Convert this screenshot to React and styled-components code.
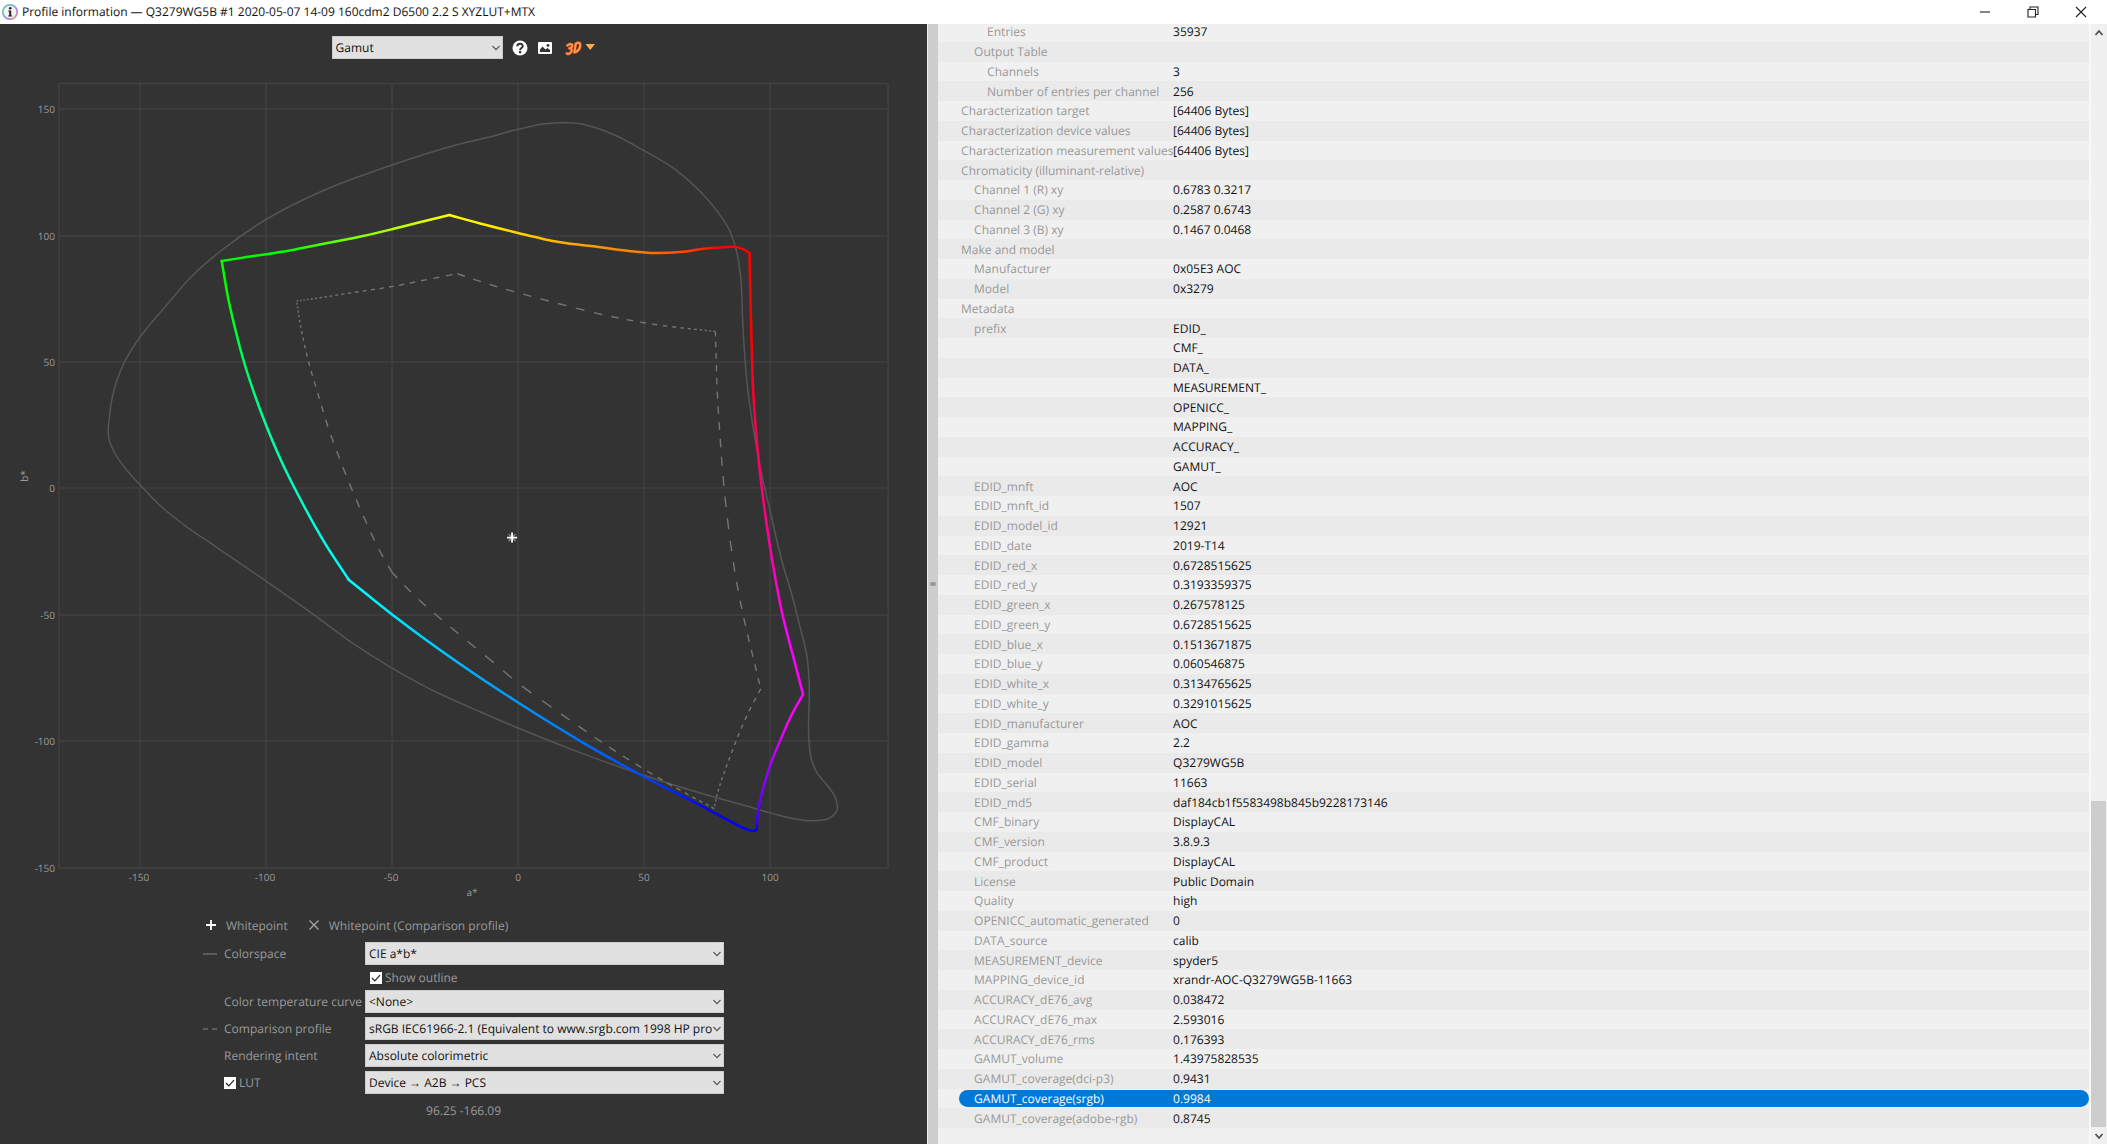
import React, { useState } from "react";
import styled, { createGlobalStyle } from "styled-components";

const GlobalStyle = createGlobalStyle`
  * {
    box-sizing: border-box;
  }
  body {
    margin: 0;
    overflow: hidden;
    background: #f0f0f0;
    font-family: "Open Sans", "Noto Sans", sans-serif;
    font-size: 12px;
    text-rendering: geometricPrecision;
  }
`;

// [label, level, value]
const profileRows = [
  ["Entries", 2, "35937"],
  ["Output Table", 1, ""],
  ["Channels", 2, "3"],
  ["Number of entries per channel", 2, "256"],
  ["Characterization target", 0, "[64406 Bytes]"],
  ["Characterization device values", 0, "[64406 Bytes]"],
  ["Characterization measurement values", 0, "[64406 Bytes]"],
  ["Chromaticity (illuminant-relative)", 0, ""],
  ["Channel 1 (R) xy", 1, "0.6783 0.3217"],
  ["Channel 2 (G) xy", 1, "0.2587 0.6743"],
  ["Channel 3 (B) xy", 1, "0.1467 0.0468"],
  ["Make and model", 0, ""],
  ["Manufacturer", 1, "0x05E3 AOC"],
  ["Model", 1, "0x3279"],
  ["Metadata", 0, ""],
  ["prefix", 1, "EDID_"],
  ["", 1, "CMF_"],
  ["", 1, "DATA_"],
  ["", 1, "MEASUREMENT_"],
  ["", 1, "OPENICC_"],
  ["", 1, "MAPPING_"],
  ["", 1, "ACCURACY_"],
  ["", 1, "GAMUT_"],
  ["EDID_mnft", 1, "AOC"],
  ["EDID_mnft_id", 1, "1507"],
  ["EDID_model_id", 1, "12921"],
  ["EDID_date", 1, "2019-T14"],
  ["EDID_red_x", 1, "0.6728515625"],
  ["EDID_red_y", 1, "0.3193359375"],
  ["EDID_green_x", 1, "0.267578125"],
  ["EDID_green_y", 1, "0.6728515625"],
  ["EDID_blue_x", 1, "0.1513671875"],
  ["EDID_blue_y", 1, "0.060546875"],
  ["EDID_white_x", 1, "0.3134765625"],
  ["EDID_white_y", 1, "0.3291015625"],
  ["EDID_manufacturer", 1, "AOC"],
  ["EDID_gamma", 1, "2.2"],
  ["EDID_model", 1, "Q3279WG5B"],
  ["EDID_serial", 1, "11663"],
  ["EDID_md5", 1, "daf184cb1f5583498b845b9228173146"],
  ["CMF_binary", 1, "DisplayCAL"],
  ["CMF_version", 1, "3.8.9.3"],
  ["CMF_product", 1, "DisplayCAL"],
  ["License", 1, "Public Domain"],
  ["Quality", 1, "high"],
  ["OPENICC_automatic_generated", 1, "0"],
  ["DATA_source", 1, "calib"],
  ["MEASUREMENT_device", 1, "spyder5"],
  ["MAPPING_device_id", 1, "xrandr-AOC-Q3279WG5B-11663"],
  ["ACCURACY_dE76_avg", 1, "0.038472"],
  ["ACCURACY_dE76_max", 1, "2.593016"],
  ["ACCURACY_dE76_rms", 1, "0.176393"],
  ["GAMUT_volume", 1, "1.43975828535"],
  ["GAMUT_coverage(dci-p3)", 1, "0.9431"],
  ["GAMUT_coverage(srgb)", 1, "0.9984"],
  ["GAMUT_coverage(adobe-rgb)", 1, "0.8745"],
];

const spectralLocus = [
  [563, 122.5], [543, 124], [518, 129.3], [487, 137.5], [460, 144], [392, 165], [320, 192],
  [266, 219.5], [222, 250], [193, 275], [165, 307], [140, 337], [124, 363], [113.3, 393],
  [109.3, 417], [108.7, 438], [114, 451.7], [125, 468], [144, 489], [160, 505.5], [183, 524],
  [217, 547.5], [266, 581], [313, 614], [350, 641.3], [392, 668], [437, 692.5], [480, 711.7],
  [518, 728], [582, 753.3], [643, 775], [700, 793], [743, 805], [770, 812.8], [793, 818.5],
  [815, 820.7], [829.5, 818], [837, 810], [835.7, 798.5], [829, 787.7], [816.7, 772.3],
  [811, 758], [809, 741.7], [809, 680], [807, 657], [800, 627], [792.3, 596.7], [781, 558],
  [770.7, 513.5], [762, 476], [753, 427], [746.7, 380], [742.7, 323], [741, 281.7],
  [738.3, 260], [735.3, 246.7], [729.3, 230], [716.7, 210.7], [700.7, 192], [675, 169.3],
  [644, 150.7], [616.7, 136], [593.3, 127], [580, 123.7], [563, 122.5],
];

// one entry per edge of the gamut hull; axis is the direction the gradient runs in
const gamutEdges = [
  {
    id: "green-yellow",
    axis: "x",
    stops: [[0, "#00ff00"], [0.28, "#00ff00"], [0.5, "#66ff00"], [0.75, "#b4ff00"], [1, "#ffff00"]],
    points: [[221.7, 261], [243, 257.6], [266.7, 254.2], [288.3, 250.8], [325, 243.5], [363, 236], [392.7, 229], [416.7, 223], [449.3, 215]],
  },
  {
    id: "yellow-red",
    axis: "x",
    stops: [[0, "#ffff00"], [0.12, "#fff000"], [0.35, "#ffb400"], [0.65, "#ff7800"], [0.8, "#ff4000"], [0.9, "#ff0000"], [1, "#ff0000"]],
    points: [[449.3, 215], [480, 223.5], [518, 233], [543, 238.9], [562, 242.4], [593, 246.2], [627, 250.7], [655, 253], [680, 252], [706, 248.5], [722, 247.2], [738, 247.4], [743.5, 249.3], [749.5, 253]],
  },
  {
    id: "red-magenta",
    axis: "y",
    stops: [[0, "#ff0000"], [0.2, "#ff0000"], [0.4, "#ff0050"], [0.56, "#ff0078"], [0.75, "#ff00c8"], [0.86, "#ff00ff"], [1, "#ff00ff"]],
    points: [[749.5, 253], [750, 280], [751.5, 340], [753.2, 392], [755.3, 424], [759.3, 467], [766, 520], [773.3, 567], [782.3, 614], [793, 656], [803, 694.3]],
  },
  {
    id: "magenta-blue",
    axis: "y",
    stops: [[0, "#ff00ff"], [0.2, "#ff00ff"], [0.5, "#a800ff"], [0.8, "#6400ff"], [0.95, "#3200ff"], [1, "#0000ff"]],
    points: [[803, 694.3], [791.5, 715], [779.3, 742.5], [770, 765.5], [764, 785], [759, 805.5], [757.2, 819], [756.7, 829.5]],
  },
  {
    id: "blue-cyan",
    axis: "x",
    stops: [[0, "#0000ff"], [0.12, "#0000ff"], [0.28, "#0046ff"], [0.55, "#0090ff"], [0.72, "#00b4ff"], [0.88, "#00e6ff"], [1, "#00ffff"]],
    points: [[756.7, 829.5], [754, 831], [750, 830.3], [729, 820.5], [701, 805.7], [644, 776.7], [582, 742], [518, 702.5], [460, 664], [392.7, 615], [348.7, 579.7]],
  },
  {
    id: "cyan-green",
    axis: "y",
    stops: [[0, "#00ffff"], [0.12, "#00ffe6"], [0.3, "#00ffc0"], [0.5, "#00ff96"], [0.72, "#00ff50"], [0.88, "#00ff00"], [1, "#00ff00"]],
    points: [[348.7, 579.7], [325, 543.3], [300.5, 499.5], [281.5, 461.5], [266, 425], [256, 398.5], [243.4, 360], [235.7, 331], [228.5, 300], [221.7, 261]],
  },
];

const comparisonEdges = [
  {
    id: "cmp-green-yellow",
    dash: [1.5, 4.5, 7],
    points: [[296.7, 301], [316.7, 298.2], [350, 293], [392, 286.5], [430, 279], [457.3, 273.7]],
  },
  {
    id: "cmp-yellow-red",
    dash: [8, 9, 1.5],
    points: [[457.3, 273.7], [493, 285.5], [518, 292.7], [560, 304], [597, 313.3], [644, 322.7], [690, 328.8], [715.3, 331.3]],
  },
  {
    id: "cmp-red-magenta",
    dash: [5, 11, 6],
    points: [[715.3, 331.3], [716, 354], [717.3, 393], [720, 436.7], [723.3, 480], [729, 532], [736.2, 580], [743.5, 617], [751.3, 650], [760.7, 688.7]],
  },
  {
    id: "cmp-magenta-blue",
    dash: [5, 4, 2],
    points: [[760.7, 688.7], [749.3, 710.5], [740, 731], [730, 756.7], [721.5, 780], [716.7, 796], [714, 808.5]],
  },
  {
    id: "cmp-blue-cyan",
    dash: [3, 12, 9],
    points: [[714, 808.5], [670, 784.5], [619, 753.5], [557, 711], [518, 683], [491.7, 661], [460, 635], [414, 595], [392.7, 573.3]],
  },
  {
    id: "cmp-cyan-green",
    dash: [9, 8, 1.5],
    points: [[392.7, 573.3], [382, 555], [363.8, 517], [355.5, 498], [340.5, 461], [328, 427], [318, 394], [310, 367], [304.5, 345], [299.5, 320], [296.7, 301]],
  },
];

const xTicks = [-150, -100, -50, 0, 50, 100];
const yTicks = [150, 100, 50, 0, -50, -100, -150];
const PLOT = { left: 59, right: 888, top: 83, bottom: 868 };
const toX = (a) => 518 + (a / 50) * 126;
const toY = (b) => Math.round(488.4 - (b / 50) * 126.4);

// slope at a point, weighted by the distance to both neighbours
function tangent(points, i) {
  const a = points[i - 1] || points[i];
  const b = points[i];
  const c = points[i + 1] || points[i];
  const ab = Math.hypot(b[0] - a[0], b[1] - a[1]);
  const bc = Math.hypot(c[0] - b[0], c[1] - b[1]);
  if (!ab) return [(c[0] - b[0]) / bc, (c[1] - b[1]) / bc];
  if (!bc) return [(b[0] - a[0]) / ab, (b[1] - a[1]) / ab];
  return [0, 1].map(
    (k) => (((b[k] - a[k]) / ab) * bc + ((c[k] - b[k]) / bc) * ab) / (ab + bc)
  );
}

function smoothPath(points) {
  let d = `M${points[0][0]} ${points[0][1]}`;
  for (let i = 0; i < points.length - 1; i++) {
    const [x1, y1] = points[i];
    const [x2, y2] = points[i + 1];
    const third = Math.hypot(x2 - x1, y2 - y1) / 3;
    const t1 = tangent(points, i);
    const t2 = tangent(points, i + 1);
    d += `C${x1 + t1[0] * third} ${y1 + t1[1] * third}`;
    d += ` ${x2 - t2[0] * third} ${y2 - t2[1] * third} ${x2} ${y2}`;
  }
  return d;
}

function taperedDash(points, [first, middle, last]) {
  let length = 0;
  for (let i = 1; i < points.length; i++) {
    length += Math.hypot(points[i][0] - points[i - 1][0], points[i][1] - points[i - 1][1]);
  }
  const dashes = [];
  let pos = 0;
  while (pos < length) {
    const t = pos / length;
    const size =
      t < 0.5 ? first + (middle - first) * t * 2 : middle + (last - middle) * (t * 2 - 1);
    dashes.push(size, size * 1.1);
    pos += size * 2.1;
  }
  return dashes.join(" ");
}

function GamutChart() {
  return (
    <StChart viewBox="0 76 927 832" role="img" aria-label="Gamut, CIE a*b*">
      <defs>
        {gamutEdges.map(({ id, axis, stops, points }) => {
          const start = points[0];
          const end = points[points.length - 1];
          return (
            <linearGradient
              key={id}
              id={id}
              gradientUnits="userSpaceOnUse"
              x1={axis === "x" ? start[0] : 0}
              x2={axis === "x" ? end[0] : 0}
              y1={axis === "y" ? start[1] : 0}
              y2={axis === "y" ? end[1] : 0}
            >
              {stops.map(([offset, color]) => (
                <stop key={offset} offset={offset} stopColor={color} />
              ))}
            </linearGradient>
          );
        })}
      </defs>
      <g stroke="#414141" strokeWidth="1.4" fill="none">
        <path d={`M${PLOT.left} ${PLOT.top + 0.5}H${PLOT.right}V${PLOT.bottom}H${PLOT.left}Z`} />
        {xTicks.map((a) => (
          <path key={a} d={`M${toX(a)} ${PLOT.top}V${PLOT.bottom}`} />
        ))}
        {yTicks.slice(0, -1).map((b) => (
          <path key={b} d={`M${PLOT.left} ${toY(b)}H${PLOT.right}`} />
        ))}
      </g>
      <g fill="#999999" fontSize="10">
        {xTicks.map((a) => (
          <text key={a} x={toX(a) - (a < 0 ? 1 : 0)} y="881" textAnchor="middle">
            {a}
          </text>
        ))}
        {yTicks.map((b) => (
          <text key={b} x="55" y={toY(b) + 4} textAnchor="end">
            {b}
          </text>
        ))}
        <text x="472" y="896" textAnchor="middle">
          a*
        </text>
        <text transform="translate(28 476) rotate(-90)" textAnchor="middle">
          b*
        </text>
      </g>
      <path d={smoothPath(spectralLocus)} fill="none" stroke="#555555" strokeWidth="1.5" />
      <g fill="none" stroke="#757575" strokeWidth="1.4">
        {comparisonEdges.map(({ id, dash, points }) => (
          <path key={id} d={smoothPath(points)} strokeDasharray={taperedDash(points, dash)} />
        ))}
      </g>
      <g fill="none" strokeWidth="2.5" strokeLinecap="round">
        {gamutEdges.map(({ id, points }) => (
          <path key={id} d={smoothPath(points)} stroke={`url(#${id})`} />
        ))}
      </g>
      <path d="M508.5 534L515.5 541M515.5 534L508.5 541" stroke="#999999" strokeWidth="1.1" />
      <path d="M512 532.5V542.5M507 537.5H517" stroke="#ffffff" strokeWidth="1.8" />
    </StChart>
  );
}

function ProfileIcon() {
  return (
    <svg width="18" height="18" viewBox="0 0 18 18" aria-hidden="true">
      <defs>
        <linearGradient id="ring" x1="0" y1="0" x2="1" y2="1">
          <stop offset="0" stopColor="#6fd08a" />
          <stop offset="0.35" stopColor="#7db4e6" />
          <stop offset="0.65" stopColor="#b27be0" />
          <stop offset="1" stopColor="#e6a56f" />
        </linearGradient>
      </defs>
      <circle cx="9" cy="9" r="7.2" fill="#f4f4f0" stroke="url(#ring)" strokeWidth="1.8" />
      <circle cx="9.2" cy="5.2" r="1.3" fill="#222222" />
      <path d="M7.2 7.6H10.2V12.4H11.2V13.4H7.2V12.4H8.2V8.6H7.2Z" fill="#222222" />
    </svg>
  );
}

function Chevron({ up }) {
  return (
    <svg width="10" height="10" viewBox="0 0 10 10" aria-hidden="true">
      <path
        d={up ? "M1.5 7L5 3L8.5 7" : "M1.5 3L5 7L8.5 3"}
        fill="none"
        stroke="#505050"
        strokeWidth="1.8"
      />
    </svg>
  );
}

function Dropdown({ value, ...rest }) {
  return (
    <StDropdown>
      <select defaultValue={value} {...rest}>
        <option value={value}>{value}</option>
      </select>
      <svg width="8" height="10" viewBox="0 0 8 10" aria-hidden="true">
        <path d="M0.5 3L4 6.7L7.5 3" fill="none" stroke="#555555" strokeWidth="1.1" />
      </svg>
    </StDropdown>
  );
}

function CheckBox({ label }) {
  const [isChecked, setIsChecked] = useState(true);
  return (
    <StCheckBox>
      <span>
        <input
          type="checkbox"
          checked={isChecked}
          onChange={(e) => setIsChecked(e.target.checked)}
        />
        {isChecked && (
          <svg width="12" height="12" viewBox="0 0 12 12" aria-hidden="true">
            <path d="M2 6L4.8 8.8L10 3.2" fill="none" stroke="#222222" strokeWidth="1.2" />
          </svg>
        )}
      </span>
      {label}
    </StCheckBox>
  );
}

function App() {
  const [selected, setSelected] = useState("GAMUT_coverage(srgb)");
  return (
    <StWindow>
      <GlobalStyle />
      <StTitleBar>
        <ProfileIcon />
        <h1>Profile information — Q3279WG5B #1 2020-05-07 14-09 160cdm2 D6500 2.2 S XYZLUT+MTX</h1>
        <StWindowButton aria-label="Minimize">
          <svg width="12" height="12" viewBox="0 0 12 12">
            <path d="M1 6H11" />
          </svg>
        </StWindowButton>
        <StWindowButton aria-label="Restore">
          <svg width="12" height="12" viewBox="0 0 12 12">
            <path d="M1 3.5H8.5V11H1ZM3 3.5V1H11V8.5H8.5" />
          </svg>
        </StWindowButton>
        <StWindowButton aria-label="Close">
          <svg width="12" height="12" viewBox="0 0 12 12">
            <path d="M1 1L11 11M11 1L1 11" />
          </svg>
        </StWindowButton>
      </StTitleBar>
      <StBody>
        <StGraphPane>
          <StToolbar>
            <StPlotSelect>
              <Dropdown value="Gamut" aria-label="Plot type" />
            </StPlotSelect>
            <StToolButton aria-label="Help">
              <svg width="16" height="16" viewBox="0 0 16 16">
                <circle cx="8" cy="8" r="7.5" fill="#ffffff" />
                <path
                  d="M5.3 6.3C5.3 2.9 10.7 2.9 10.7 6.2C10.7 8 8.1 8.1 8.1 10"
                  fill="none"
                  stroke="#333333"
                  strokeWidth="2"
                />
                <circle cx="8.1" cy="12.1" r="1.3" fill="#333333" />
              </svg>
            </StToolButton>
            <StToolButton aria-label="Save image">
              <svg width="16" height="16" viewBox="0 0 16 16">
                <rect x="1" y="2" width="14" height="12" rx="1" fill="#ffffff" />
                <path d="M3 12V9.5L5.5 6.5L8.5 9.5L10.5 8L13 10V12Z" fill="#333333" />
                <circle cx="11" cy="5.5" r="1.4" fill="#333333" />
              </svg>
            </StToolButton>
            <StToolButton aria-label="3D view">
              <svg width="31" height="16" viewBox="0 0 31 16">
                <g fill="none" strokeLinejoin="round" strokeLinecap="round">
                  <g stroke="#b8501f" strokeWidth="3.2">
                    <path d="M2.4 5.4C5 3.4 8 4 7.2 6.2C6.8 7.6 5.4 8.2 4.4 8.4C7.6 8.2 7.2 12 5 13.2C3.8 14 2.4 14 1.8 13.4" />
                    <path d="M10.8 3.6L9.4 12.4C12.8 11.6 14.6 9.4 15.2 6C15.6 2.8 14.2 2 10.8 3.6Z" />
                  </g>
                  <g stroke="#ff9850" strokeWidth="1.9">
                    <path d="M2.4 5.4C5 3.4 8 4 7.2 6.2C6.8 7.6 5.4 8.2 4.4 8.4C7.6 8.2 7.2 12 5 13.2C3.8 14 2.4 14 1.8 13.4" />
                    <path d="M10.8 3.6L9.4 12.4C12.8 11.6 14.6 9.4 15.2 6C15.6 2.8 14.2 2 10.8 3.6Z" />
                  </g>
                </g>
                <path d="M20.5 4H30L25.2 10Z" fill="#ffa850" />
              </svg>
            </StToolButton>
          </StToolbar>
          <GamutChart />
          <StLegend>
            <svg width="12" height="12" viewBox="0 0 12 12" aria-hidden="true">
              <path d="M6 1V11M1 6H11" stroke="#ffffff" strokeWidth="1.8" />
            </svg>
            <span>Whitepoint</span>
            <svg width="12" height="12" viewBox="0 0 12 12" aria-hidden="true">
              <path d="M1.5 1.5L10.5 10.5M10.5 1.5L1.5 10.5" stroke="#aaaaaa" strokeWidth="1.2" />
            </svg>
            <span>Whitepoint (Comparison profile)</span>
          </StLegend>
          <StOptions>
            <svg width="14" height="4" viewBox="0 0 14 4" aria-hidden="true">
              <path d="M0 2H14" stroke="#777777" strokeWidth="1.2" />
            </svg>
            <label htmlFor="colorspace">Colorspace</label>
            <Dropdown id="colorspace" value="CIE a*b*" />
            <StOutlineOption>
              <CheckBox label="Show outline" />
            </StOutlineOption>
            <label htmlFor="curve">Color temperature curve</label>
            <Dropdown id="curve" value="<None>" />
            <svg width="14" height="4" viewBox="0 0 14 4" aria-hidden="true">
              <path d="M0 2H5M9 2H14" stroke="#888888" strokeWidth="1.2" />
            </svg>
            <label htmlFor="comparison">Comparison profile</label>
            <Dropdown
              id="comparison"
              value="sRGB IEC61966-2.1 (Equivalent to www.srgb.com 1998 HP pro"
            />
            <label htmlFor="intent">Rendering intent</label>
            <Dropdown id="intent" value="Absolute colorimetric" />
            <CheckBox label="LUT" />
            <Dropdown value="Device → A2B → PCS" aria-label="LUT direction" />
          </StOptions>
          <StReadout>96.25 -166.09</StReadout>
        </StGraphPane>
        <StSplitter>
          <i />
        </StSplitter>
        <StInfoPane>
          <StTable>
            <tbody>
              {profileRows.map(([label, level, value], i) => (
                <StRow
                  key={i}
                  $selected={label === selected}
                  onClick={() => setSelected(label)}
                >
                  <StLabelCell $level={level}>{label}</StLabelCell>
                  <StValueCell>{value}</StValueCell>
                </StRow>
              ))}
            </tbody>
          </StTable>
        </StInfoPane>
        <StScrollBar>
          <button aria-label="Scroll up">
            <Chevron up />
          </button>
          <StTrack>
            <i />
          </StTrack>
          <button aria-label="Scroll down">
            <Chevron />
          </button>
        </StScrollBar>
      </StBody>
    </StWindow>
  );
}

const StWindow = styled.div`
  height: 100vh;
  display: flex;
  flex-direction: column;
`;

const StTitleBar = styled.header`
  flex: none;
  height: 24px;
  display: flex;
  align-items: center;
  padding-left: 1px;
  padding-right: 2px;
  background: #ffffff;
  h1 {
    flex: 1;
    margin: 0 0 0 3px;
    font-size: 12px;
    font-weight: 400;
    line-height: 24px;
    color: #111111;
    white-space: nowrap;
  }
`;

const StWindowButton = styled.button`
  width: 48px;
  height: 24px;
  padding: 0;
  border: none;
  background: none;
  svg {
    display: block;
    margin: 0 auto;
    fill: none;
    stroke: #222222;
    stroke-width: 1.1;
  }
  &:hover {
    background: #e5e5e5;
  }
`;

const StBody = styled.div`
  flex: 1;
  min-height: 0;
  display: flex;
`;

const StGraphPane = styled.main`
  flex: 0 0 44%;
  display: flex;
  flex-direction: column;
  background: #333333;
  color: #999999;
  overflow: hidden;
`;

const StToolbar = styled.div`
  flex: none;
  display: flex;
  justify-content: center;
  align-items: center;
  gap: 9px;
  padding-top: 12px;
  margin-bottom: 17px;
`;

const StPlotSelect = styled.div`
  width: 171px;
`;

const StToolButton = styled.button`
  display: flex;
  padding: 0;
  border: none;
  background: none;
  &:last-child {
    margin-left: 3px;
  }
`;

const StChart = styled.svg`
  flex: none;
  display: block;
  width: 100%;
`;

const StLegend = styled.div`
  display: flex;
  align-items: center;
  height: 18px;
  margin: 8px 203px;
  padding-left: 2px;
  white-space: nowrap;
  span {
    margin: 0 20px 0 9px;
  }
`;

const StOptions = styled.div`
  display: grid;
  grid-template-columns: 21px 141px 1fr;
  align-items: center;
  row-gap: 4px;
  margin: 0 203px;
  white-space: nowrap;
  > label {
    grid-column: 2;
  }
`;

const StOutlineOption = styled.div`
  grid-column: 3;
  padding-left: 5px;
`;

const StDropdown = styled.div`
  display: grid;
  align-items: center;
  select {
    grid-area: 1 / 1;
    min-width: 0;
    width: 100%;
    height: 23px;
    padding: 0 11px 0 3px;
    appearance: none;
    border: 1px solid #cccccc;
    border-radius: 0;
    background: #e1e1e1;
    color: #111111;
    font-family: inherit;
    font-size: 12px;
    text-rendering: inherit;
  }
  svg {
    grid-area: 1 / 1;
    justify-self: end;
    margin-right: 3px;
    pointer-events: none;
  }
`;

const StCheckBox = styled.label`
  display: flex;
  align-items: center;
  gap: 3px;
  height: 17px;
  span {
    display: grid;
  }
  input {
    grid-area: 1 / 1;
    width: 12px;
    height: 12px;
    margin: 0;
    appearance: none;
    background: #ffffff;
  }
  svg {
    grid-area: 1 / 1;
    pointer-events: none;
  }
`;

const StReadout = styled.div`
  margin-top: 8px;
  line-height: 18px;
  text-align: center;
`;

const StSplitter = styled.div`
  flex: 0 0 11px;
  display: flex;
  align-items: center;
  justify-content: center;
  border-left: 1px solid #f0f0f0;
  background: #cdcdcd;
  cursor: col-resize;
  i {
    width: 6px;
    height: 4px;
    border-radius: 2px;
    background: #999999;
  }
`;

const StInfoPane = styled.section`
  flex: 1;
  min-width: 0;
  display: flex;
  flex-direction: column;
  justify-content: flex-end;
  padding-bottom: 16px;
  background: #f0f0f0;
  overflow: hidden;
`;

const StTable = styled.table`
  display: block;
  flex: none;
  height: calc(100% + 2px);
  tbody {
    display: grid;
    grid-auto-rows: 1fr;
    height: 100%;
  }
`;

const StRow = styled.tr`
  display: grid;
  grid-template-columns: 214px 1fr;
  align-items: center;
  min-height: 0;
  margin: ${(props) => (props.$selected ? "1px 0 1px 21px" : "0")};
  padding-left: ${(props) => (props.$selected ? "0" : "21px")};
  border-radius: ${(props) => (props.$selected ? "9px" : "0")};
  color: ${(props) => (props.$selected ? "#ffffff" : "#111111")};
  --label: ${(props) => (props.$selected ? "#ffffff" : "#999999")};
  background: ${(props) => (props.$selected ? "#0078d7" : "#f0f0f0")};
  &:nth-child(even) {
    background: ${(props) => (props.$selected ? "#0078d7" : "#eaeaea")};
  }
`;

const StCell = styled.td`
  padding: 0;
  line-height: 17px;
  white-space: nowrap;
`;

const StLabelCell = styled(StCell)`
  padding-left: ${(props) => 2 + props.$level * 13}px;
  color: var(--label);
`;

const StValueCell = styled(StCell)`
  grid-column: 2;
`;

const StScrollBar = styled.div`
  flex: 0 0 18px;
  display: flex;
  flex-direction: column;
  padding-right: 1px;
  border-left: 2px solid #f8f8f8;
  background: #f0f0f0;
  button {
    display: flex;
    align-items: center;
    justify-content: center;
    height: 17px;
    padding: 0;
    border: none;
    background: none;
  }
`;

const StTrack = styled.div`
  flex: 1;
  display: flex;
  flex-direction: column;
  justify-content: flex-end;
  i {
    height: 30%;
    background: #cdcdcd;
  }
`;

export default App;
